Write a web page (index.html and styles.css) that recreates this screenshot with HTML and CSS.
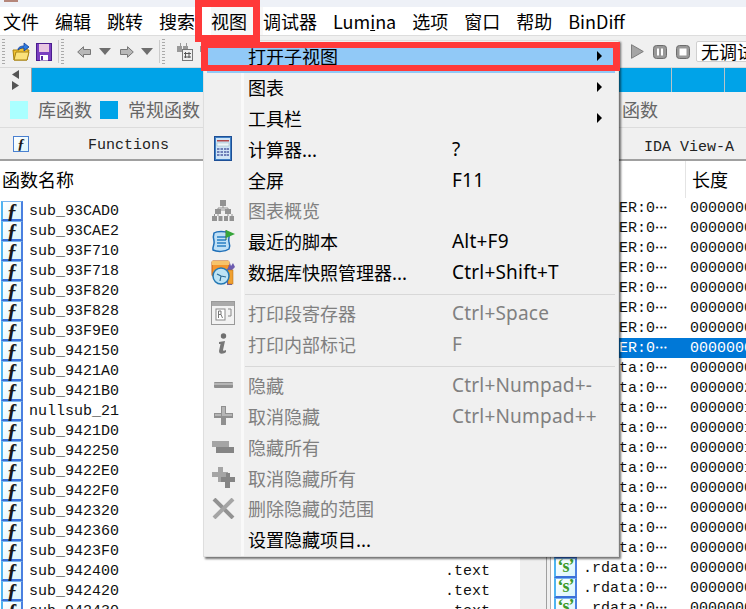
FILE: index.html
```html
<!DOCTYPE html>
<html lang="zh">
<head>
<meta charset="utf-8">
<title>IDA</title>
<link rel="stylesheet" href="styles.css">
</head>
<body>
<div class="app">
  <div class="titlebar"><span class="appicon"></span></div>
  <nav class="menubar">
    <span class="mi">文件</span><span class="mi">编辑</span><span class="mi">跳转</span><span class="mi">搜索</span><span class="mi active">视图</span><span class="mi">调试器</span><span class="mi">Lum<u>i</u>na</span><span class="mi">选项</span><span class="mi">窗口</span><span class="mi">帮助</span><span class="mi">BinDiff</span>
  </nav>
  <div class="toolbar">
    <span class="grip"></span>
    <svg class="tb folder" width="18" height="19" viewBox="0 0 18 19"><path d="M1 8h6l1-2h7v2h2l-2 10H2z" fill="#f2c230" stroke="#a8820f"/><path d="M2 18l2-8h13l-2 8z" fill="#fbe27a" stroke="#a8820f"/><path d="M6 8c0-3 3-4 6-4V1l5 4-5 4V6c-2 0-4 0-6 2z" fill="#2f7de0" stroke="#123f9c" stroke-width=".8"/></svg>
    <svg class="tb save" width="16" height="18" viewBox="0 0 16 18"><rect x=".5" y=".5" width="15" height="17" fill="#7a3fc0" stroke="#4a1d8e"/><rect x="3" y="1" width="10" height="8" fill="#e9c7e2"/><rect x="4" y="12" width="8" height="5.500" fill="#fff"/><rect x="5" y="13" width="2" height="4" fill="#5a2aa0"/></svg>
    <span class="grip g2"></span>
    <svg class="tb back" width="14" height="12" viewBox="0 0 14 12"><path d="M.7 6 6.500.7v2.800h7v5h-7v2.800z" fill="#b8b8b8" stroke="#777"/></svg>
    <svg class="tb drop d1" width="12" height="7" viewBox="0 0 12 7"><path d="M0 0h12L6 7z" fill="#6e6e6e"/></svg>
    <svg class="tb fwd" width="14" height="12" viewBox="0 0 14 12"><path d="M13.300 6 7.500.7v2.800h-7v5h7v2.800z" fill="#b8b8b8" stroke="#777"/></svg>
    <svg class="tb drop d2" width="12" height="7" viewBox="0 0 12 7"><path d="M0 0h12L6 7z" fill="#6e6e6e"/></svg>
    <span class="grip g3"></span>
    <svg class="tb bino" width="17" height="19" viewBox="0 0 17 19"><path d="M1 4h3V1h1v3h1v6H1zM7 4h3V1h1v3h1v3H7z" fill="#999"/><rect x="6.500" y="7.500" width="10" height="11" fill="#eee" stroke="#777"/><path d="M9.500 10v6M13 10v6M8 11.500h7M8 15h7" stroke="#555"/></svg>
    <svg class="tb bino2" width="17" height="19" viewBox="0 0 17 19"><path d="M1 4h3V1h1v3h1v6H1z" fill="#999"/></svg>
    <div class="tb-right">
      <svg class="tb" width="13" height="15" viewBox="0 0 13 15"><path d="M.5.700 12.300 7.500.5 14.300z" fill="#a5a5a5" stroke="#7d7d7d"/></svg>
      <svg class="tb" width="14" height="14" viewBox="0 0 14 14"><rect x=".5" y=".5" width="13" height="13" rx="3" fill="#999" stroke="#6d6d6d"/><path d="M4 3.500h2v7H4zM8 3.500h2v7H8z" fill="#fff"/></svg>
      <svg class="tb" width="14" height="14" viewBox="0 0 14 14"><rect x=".5" y=".5" width="13" height="13" rx="3" fill="#999" stroke="#6d6d6d"/><rect x="3.500" y="3.500" width="7" height="7" fill="#fff"/></svg>
      <div class="combo">无调试器</div>
    </div>
  </div>
  <div class="navband">
    <div class="navarrows">
      <svg width="7" height="9" viewBox="0 0 7 9"><path d="M7 0v9L0 4.500z" fill="#555"/></svg>
      <svg width="7" height="9" viewBox="0 0 7 9"><path d="M0 0v9l7-4.500z" fill="#555"/></svg>
    </div>
    <div class="band">
      <span class="bandcell c1"></span><span class="bandcell c2"></span><span class="bandcell c3"></span>
    </div>
  </div>
  <div class="legend">
    <span class="swatch lib"></span><span class="ltext">库函数</span>
    <span class="swatch reg"></span><span class="ltext">常规函数</span>
    <span class="ltext lend">函数</span>
  </div>
  <div class="tabs">
    <span class="fi small">ƒ</span>
    <span class="tabtext t1">Functions</span>
    <span class="tabtext t2">IDA View-A</span>
  </div>
  <div class="panels">
    <section class="left">
      <div class="lhead">函数名称</div>
      <div class="lrow"><span class="fi">ƒ</span><span class="nm">sub_93CAD0</span></div>
      <div class="lrow"><span class="fi">ƒ</span><span class="nm">sub_93CAE2</span></div>
      <div class="lrow"><span class="fi">ƒ</span><span class="nm">sub_93F710</span></div>
      <div class="lrow"><span class="fi">ƒ</span><span class="nm">sub_93F718</span></div>
      <div class="lrow"><span class="fi">ƒ</span><span class="nm">sub_93F820</span></div>
      <div class="lrow"><span class="fi">ƒ</span><span class="nm">sub_93F828</span></div>
      <div class="lrow"><span class="fi">ƒ</span><span class="nm">sub_93F9E0</span></div>
      <div class="lrow"><span class="fi">ƒ</span><span class="nm">sub_942150</span></div>
      <div class="lrow"><span class="fi">ƒ</span><span class="nm">sub_9421A0</span></div>
      <div class="lrow"><span class="fi">ƒ</span><span class="nm">sub_9421B0</span></div>
      <div class="lrow"><span class="fi">ƒ</span><span class="nm">nullsub_21</span></div>
      <div class="lrow"><span class="fi">ƒ</span><span class="nm">sub_9421D0</span></div>
      <div class="lrow"><span class="fi">ƒ</span><span class="nm">sub_942250</span></div>
      <div class="lrow"><span class="fi">ƒ</span><span class="nm">sub_9422E0</span></div>
      <div class="lrow"><span class="fi">ƒ</span><span class="nm">sub_9422F0</span></div>
      <div class="lrow"><span class="fi">ƒ</span><span class="nm">sub_942320</span></div>
      <div class="lrow"><span class="fi">ƒ</span><span class="nm">sub_942360</span></div>
      <div class="lrow"><span class="fi">ƒ</span><span class="nm">sub_9423F0</span></div>
      <div class="lrow"><span class="fi">ƒ</span><span class="nm">sub_942400</span><span class="seg">.text</span></div>
      <div class="lrow"><span class="fi">ƒ</span><span class="nm">sub_942420</span><span class="seg">.text</span></div>
      <div class="lrow"><span class="fi">ƒ</span><span class="nm">sub_942430</span><span class="seg">.text</span></div>
    </section>
    <div class="divider"></div>
    <section class="right">
      <div class="rinner">
        <div class="rhead"><span class="rhcell">长度</span></div>
        <div class="rrow"><span class="si">‘s’</span><span class="sg">LOADER:0<i>•••</i></span><span class="len">00000000</span></div>
        <div class="rrow"><span class="si">‘s’</span><span class="sg">LOADER:0<i>•••</i></span><span class="len">00000000</span></div>
        <div class="rrow"><span class="si">‘s’</span><span class="sg">LOADER:0<i>•••</i></span><span class="len">00000000</span></div>
        <div class="rrow"><span class="si">‘s’</span><span class="sg">LOADER:0<i>•••</i></span><span class="len">00000000</span></div>
        <div class="rrow"><span class="si">‘s’</span><span class="sg">LOADER:0<i>•••</i></span><span class="len">00000000</span></div>
        <div class="rrow"><span class="si">‘s’</span><span class="sg">LOADER:0<i>•••</i></span><span class="len">00000000</span></div>
        <div class="rrow"><span class="si">‘s’</span><span class="sg">LOADER:0<i>•••</i></span><span class="len">00000000</span></div>
        <div class="rrow sel"><span class="si">‘s’</span><span class="sg">LOADER:0<i>•••</i></span><span class="len">00000000</span></div>
        <div class="rrow"><span class="si">‘s’</span><span class="sg">.rdata:0<i>•••</i></span><span class="len">00000000</span></div>
        <div class="rrow"><span class="si">‘s’</span><span class="sg">.rdata:0<i>•••</i></span><span class="len">00000020</span></div>
        <div class="rrow"><span class="si">‘s’</span><span class="sg">.rdata:0<i>•••</i></span><span class="len">00000010</span></div>
        <div class="rrow"><span class="si">‘s’</span><span class="sg">.rdata:0<i>•••</i></span><span class="len">00000010</span></div>
        <div class="rrow"><span class="si">‘s’</span><span class="sg">.rdata:0<i>•••</i></span><span class="len">00000010</span></div>
        <div class="rrow"><span class="si">‘s’</span><span class="sg">.rdata:0<i>•••</i></span><span class="len">00000010</span></div>
        <div class="rrow"><span class="si">‘s’</span><span class="sg">.rdata:0<i>•••</i></span><span class="len">00000000</span></div>
        <div class="rrow"><span class="si">‘s’</span><span class="sg">.rdata:0<i>•••</i></span><span class="len">00000000</span></div>
        <div class="rrow"><span class="si">‘s’</span><span class="sg">.rdata:0<i>•••</i></span><span class="len">00000000</span></div>
        <div class="rrow"><span class="si">‘s’</span><span class="sg">.rdata:0<i>•••</i></span><span class="len">00000000</span></div>
        <div class="rrow"><span class="si">‘s’</span><span class="sg">.rdata:0<i>•••</i></span><span class="len">00000000</span></div>
        <div class="rrow"><span class="si">‘s’</span><span class="sg">.rdata:0<i>•••</i></span><span class="len">00000000</span></div>
        <div class="rrow"><span class="si">‘s’</span><span class="sg">.rdata:0<i>•••</i></span><span class="len">00000000</span></div>
      </div>
    </section>
  </div>

  <div class="menu">
    <div class="row hot"><span class="ic"></span><span class="lb">打开子视图</span><span class="sc"></span><span class="arrow"></span></div>
    <div class="row"><span class="ic"></span><span class="lb">图表</span><span class="sc"></span><span class="arrow"></span></div>
    <div class="row"><span class="ic"></span><span class="lb">工具栏</span><span class="sc"></span><span class="arrow"></span></div>
    <div class="row"><span class="ic"><svg width="18" height="25" viewBox="0 0 18 25"><rect x=".5" y=".5" width="17" height="24" fill="#3f7fc4" stroke="#1d4f96"/><rect x="2" y="2" width="14" height="21" fill="#cfe4f6"/><rect x="3" y="4" width="12" height="1.500" fill="#b0484c"/><rect x="3" y="7" width="12" height="3" fill="#eef5fb" stroke="#8aa" stroke-width=".4"/><path d="M3 12h2.500v2H3zM6.500 12H9v2H6.500zM10 12h2.500v2H10zM13 12h2v2h-2zM3 15h2.500v2H3zM6.500 15H9v2H6.500zM10 15h2.500v2H10zM13 15h2v2h-2zM3 18h2.500v2H3zM6.500 18H9v2H6.500zM10 18h2.500v2H10zM13 18h2v2h-2z" fill="#6e7fb8"/></svg></span><span class="lb">计算器...</span><span class="sc">?</span><span></span></div>
    <div class="row"><span class="ic"></span><span class="lb">全屏</span><span class="sc">F11</span><span></span></div>
    <div class="row off"><span class="ic"><svg width="24" height="22" viewBox="0 0 24 22"><path d="M9 1h6v6H9zM4 10h6v5H4zM14 10h6v5h-6zM1 17h5v5H1zM7.500 17h4v5h-4zM13 17h4v5h-4zM18.500 17H23v5h-4.500z" fill="#929292"/><path d="M12 7v2M7 9h10v2H7zM3.500 15v2M7 15v2M17 15v2M21 15v2" stroke="#929292" fill="none"/></svg></span><span class="lb">图表概览</span><span class="sc"></span><span></span></div>
    <div class="row"><span class="ic"><svg width="25" height="24" viewBox="0 0 25 24"><path d="M3 4c3-2 11-2 15 0 1 3-1 5 0 9 1 3 1 5 0 7-4 3-12 3-16 1-1-3 2-5 1-9C2 9 2 7 3 4z" fill="#bfe0f6" stroke="#1e6fb8" stroke-width="1.500"/><path d="M6 8h9M6 11h9M6 14h9M6 17h9" stroke="#2a7fc4" stroke-width="1.300"/><path d="M15 1v10" stroke="#3c6b2c"/><path d="M15 1l9 4-9 4z" fill="#35a53a"/></svg></span><span class="lb">最近的脚本</span><span class="sc">Alt+F9</span><span></span></div>
    <div class="row"><span class="ic"><svg width="25" height="25" viewBox="0 0 25 25"><rect x="1" y="1" width="17" height="15" rx="1" fill="#f4962e" stroke="#c85f10"/><rect x="1" y="1" width="17" height="4" fill="#f7c36b"/><path d="M17 8l2-5 1 3 2-3 2 4-3 3v15h-5V9z" fill="#6c5cb0"/><rect x="17" y="10" width="5" height="14" fill="#f0a030" stroke="#b06a10" stroke-width=".5"/><circle cx="10" cy="16" r="8" fill="#bde3f5" stroke="#2378b4" stroke-width="1.500"/><path d="M10 16l-4-2M10 16l-1 5M10 16l5 1" stroke="#2a6a96" stroke-width="1.200"/></svg></span><span class="lb">数据库快照管理器...</span><span class="sc">Ctrl+Shift+T</span><span></span></div>
    <div class="sep"></div>
    <div class="row off"><span class="ic"><svg width="24" height="24" viewBox="0 0 24 24"><rect x=".5" y=".5" width="23" height="23" fill="#f2f2f2" stroke="#999" stroke-width="1"/><rect x="1" y="1" width="22" height="4" fill="#aaa"/><rect x="5" y="8" width="9" height="11" fill="#fff" stroke="#888"/><path d="M17 8h3v7h-3" fill="none" stroke="#888"/><path d="M7.500 17v-7h2.500v3.500H7.500M10 13.500l1.500 3.500" fill="none" stroke="#777"/></svg></span><span class="lb">打印段寄存器</span><span class="sc">Ctrl+Space</span><span></span></div>
    <div class="row off"><span class="ic"><svg width="10" height="22" viewBox="0 0 10 22"><circle cx="5.500" cy="3" r="2.700" fill="#6f6f6f"/><path d="M1 9l6-1-2 9c0 1 1 1 3 0v2c-2 2-7 3-7-1l1.500-7H1z" fill="#777"/></svg></span><span class="lb">打印内部标记</span><span class="sc">F</span><span></span></div>
    <div class="sep"></div>
    <div class="row off"><span class="ic"><svg width="19" height="6" viewBox="0 0 19 6"><rect width="19" height="6" rx="1" fill="#8f8f8f"/><rect y="1" width="19" height="2" fill="#b5b5b5"/></svg></span><span class="lb">隐藏</span><span class="sc">Ctrl+Numpad+-</span><span></span></div>
    <div class="row off"><span class="ic"><svg width="19" height="19" viewBox="0 0 19 19"><path d="M7 0h5v7h7v5h-7v7H7v-7H0V7h7z" fill="#8f8f8f"/><path d="M8 1h3v7h7v2H8zM1 8h6v2H1z" fill="#b5b5b5"/></svg></span><span class="lb">取消隐藏</span><span class="sc">Ctrl+Numpad++</span><span></span></div>
    <div class="row off"><span class="ic"><svg width="22" height="12" viewBox="0 0 22 12"><rect width="17" height="6" fill="#a5a5a5"/><rect x="4" y="6" width="18" height="6" fill="#858585"/></svg></span><span class="lb">隐藏所有</span><span class="sc"></span><span></span></div>
    <div class="row off"><span class="ic"><svg width="23" height="21" viewBox="0 0 23 21"><path d="M6 0h5v5h5v5h-5v5H6v-5H0V5h6z" fill="#a5a5a5"/><path d="M14 6h4v4h5v5h-5v6h-5v-6H9v-5h5z" fill="#858585"/></svg></span><span class="lb">取消隐藏所有</span><span class="sc"></span><span></span></div>
    <div class="row off"><span class="ic"><svg width="23" height="21" viewBox="0 0 23 21"><path d="M2 1l19 19" stroke="#929292" stroke-width="4"/><path d="M21 1 2 20" stroke="#a5a5a5" stroke-width="4"/></svg></span><span class="lb">删除隐藏的范围</span><span class="sc"></span><span></span></div>
    <div class="row"><span class="ic"></span><span class="lb">设置隐藏项目...</span><span class="sc"></span><span></span></div>
  </div>

  <div class="mark mark-menu"></div>
  <div class="mark mark-row"></div>
</div>
</body>
</html>
```

FILE: styles.css
```css
* { box-sizing: border-box; }
html, body { margin: 0; padding: 0; }
body { width: 746px; height: 609px; overflow: hidden; background: #f0f0f0; }
.app {
  position: relative; width: 746px; height: 609px; overflow: hidden;
  display: flex; flex-direction: column;
  font-family: "Noto Sans CJK SC", "Noto Sans", sans-serif; font-size: 18px; color: #000;
}
.titlebar { height: 7px; background: #eef1f7; flex: none; }
.appicon { display: block; width: 14px; height: 2px; margin-left: 4px; background: #b5867a; }
.menubar { height: 29px; flex: none; background: #fff; display: flex; padding-left: 3px; border-bottom: 1px solid #ddd; line-height: 29px; }
.mi { padding-right: 16px; white-space: nowrap; }
.mi.active { box-shadow: inset 0 0 0 20px #f7f7f7; }
.toolbar { height: 32px; flex: none; display: flex; align-items: center; background: #f0f0f0; overflow: hidden; border-bottom: 1px solid #d8d8d8; }
.grip { width: 3px; height: 25px; flex: none; margin-left: 2px; background: repeating-linear-gradient(#aaa 0 1px, transparent 1px 3px); }
.g2 { margin-left: 9px; box-shadow: -4px 0 0 -1px #ccc; }
.g3 { margin-left: 9px; box-shadow: -4px 0 0 -1px #ccc; }
.tb { flex: none; display: block; }
.folder { margin-left: 7px; }
.save { margin-left: 6px; }
.back { margin-left: 13px; }
.d1 { margin-left: 8px; }
.fwd { margin-left: 9px; }
.d2 { margin-left: 7px; }
.bino { margin-left: 11px; }
.bino2 { margin-left: 6px; }
.tb-right { margin-left: 415px; flex: none; display: flex; align-items: center; gap: 9px; }
.combo { width: 70px; flex: none; height: 21px; line-height: 19px; background: #fff; border: 1px solid #d0d0d0; border-radius: 2px; padding-left: 4px; margin-left: -3px; white-space: nowrap; overflow: hidden; }
.navband { height: 24px; flex: none; display: flex; }
.navarrows { width: 31px; flex: none; display: flex; flex-direction: column; align-items: center; justify-content: center; gap: 2px; }
.band { flex: 1; background: #00a3e8; border-left: 1px solid #a0a0a0; display: flex; }
.bandcell { height: 24px; border-right: 1px solid #b8c4c8; flex: none; }
.c1 { width: 640px; }
.c2 { width: 53px; }
.c3 { width: 21px; border-right: 0; }
.legend { height: 36px; flex: none; display: flex; align-items: center; padding-left: 10px; border-bottom: 1px solid #dcdcdc; }
.swatch { width: 18px; height: 18px; flex: none; }
.lib { background: #aaffff; }
.reg { background: #00a3e8; margin-left: 8px; }
.ltext { color: #666; margin-left: 10px; padding-bottom: 2px; }
.lend { margin-left: auto; margin-right: 88px; }
.tabs { height: 33px; flex: none; display: flex; align-items: center; border-bottom: 2px solid #a0a0a0; }
.tabtext { font-family: "Liberation Mono", monospace; font-size: 15px; color: #222; }
.t1 { margin-left: 59px; padding-top: 4px; }
.t2 { margin-left: auto; margin-right: 12px; padding-top: 7px; }
.panels { flex: 1; display: flex; min-height: 0; }
.left { width: 520px; flex: none; background: #fff; overflow: hidden; }
.lhead { height: 40px; line-height: 37px; padding-left: 2px; }
.lrow { height: 20px; display: flex; align-items: center; font-family: "Liberation Mono", monospace; font-size: 15px; }
.fi {
  width: 22px; height: 20px; flex: none; margin-left: 1px; display: block; text-align: center;
  font: italic 700 21px/18px "Liberation Serif", serif; color: #1a1a1a;
  background: linear-gradient(135deg, #fff, #dcf6fc);
  border-style: solid; border-width: 1px 2px 2px 2px; border-color: #78b4ee #4a80e0 #3a6fd8 #4fb4f0;
}
.fi.small { width: 16px; height: 16px; margin-left: 13px; font-size: 15px; line-height: 14px; border-width: 1px; border-color: #4a80d0; }
.nm { margin-left: 6px; width: 416px; flex: none; color: #111; padding-top: 1px; }
.seg { color: #111; padding-top: 1px; }
.divider { width: 26px; flex: none; }
.right { flex: 1; border-left: 1px solid #a0a0a0; padding-left: 3px; min-width: 0; }
.rinner { height: 100%; background: #fff; border-left: 1px solid #b0b0b0; overflow: hidden; }
.rhead { height: 37px; display: flex; padding-left: 134px; }
.rhcell { border-left: 1px solid #e4e4e4; padding-left: 6px; line-height: 37px; flex: 1; }
.rrow { height: 20px; display: flex; align-items: center; font-family: "Liberation Mono", monospace; font-size: 15px; width: 195px; white-space: nowrap; color: #111; }
.si {
  width: 23px; height: 20px; flex: none; margin-left: 3px; text-align: center; letter-spacing: -1px;
  font: 700 18px/15px "Liberation Serif", serif; color: #3c9a28;
  background: linear-gradient(135deg, #fff, #d8f4fb);
  border-style: solid; border-width: 1px 2px 2px 2px; border-color: #78b4ee #4a80e0 #3a6fd8 #4fb4f0;
}
.sg { margin-left: 6px; width: 107px; flex: none; }
.sg i { font: 400 7px "DejaVu Sans", sans-serif; letter-spacing: 0; vertical-align: 2px; }
.rrow.sel { background: #0078d7; color: #fff; }
.menu {
  position: absolute; left: 203px; top: 40px; width: 416px; height: 517px; padding: 1.5px 3px;
  border: 1px solid #dedede;
  background: linear-gradient(90deg, #f0f0f0 37px, #f9f9f9 37px, #f9f9f9 40px, #f0f0f0 40px);
  box-shadow: 2px 2px 2px rgba(0,0,0,.55);
}
.row { height: 30.9px; display: grid; grid-template-columns: 41px 204px 145px 18px; align-items: center; padding-bottom: 4px; }
.lb { white-space: nowrap; }
.sc { font-family: "Noto Sans", "Noto Sans CJK SC", sans-serif; font-size: 19px; letter-spacing: .2px; white-space: nowrap; }
.ic { display: flex; justify-content: center; align-items: center; width: 32px; }
.ic svg { display: block; flex: none; }
.hot { background: #91c9f7; }
.off { color: #808080; }
.arrow { width: 0; height: 0; border-left: 5px solid #000; border-top: 5px solid transparent; border-bottom: 5px solid transparent; }
.sep { height: 10px; margin-left: 38px; background: linear-gradient(#d8d8d8, #d8d8d8) center / 100% 1px no-repeat; }
.mark { position: absolute; border: 7px solid #ff3939; }
.mark-menu { left: 195px; top: 0; width: 65px; height: 42px; }
.mark-row { left: 201px; top: 42px; width: 419px; height: 29px; border-width: 6px 7px; }
```
